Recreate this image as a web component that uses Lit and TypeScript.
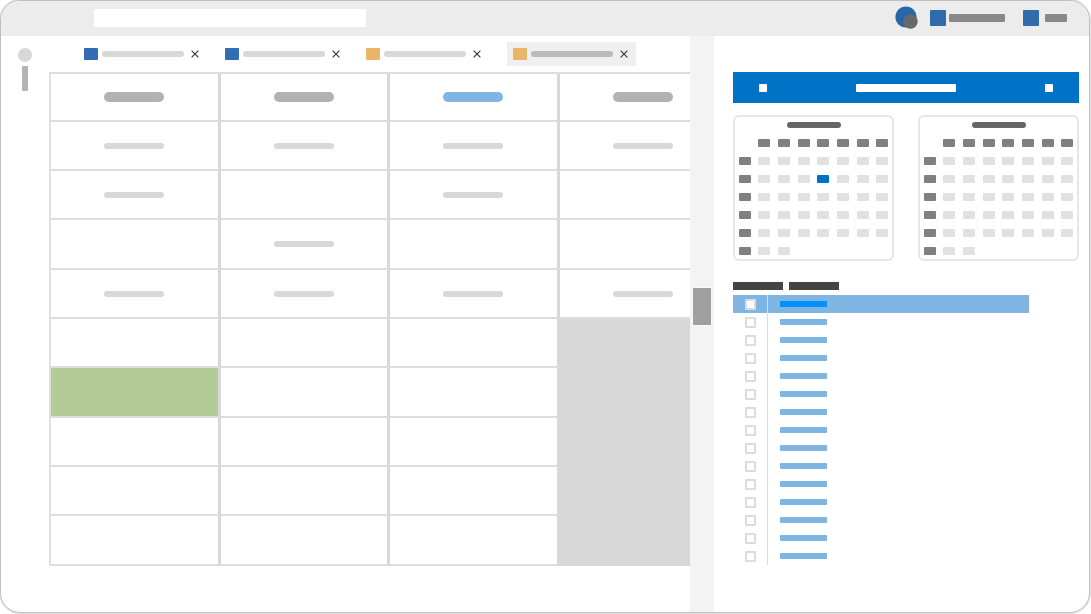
import { LitElement, html, css, svg } from "lit";
import { customElement, property, state } from "lit/decorators.js";
import { classMap } from "lit/directives/class-map.js";

type Tone = "gray" | "blue";

interface Tab {
  id: number;
  color: "blue" | "amber";
}

const DAY_TONES: Tone[] = ["gray", "gray", "blue", "gray"];

const ENTRIES: boolean[][] = [
  [true, true, true, true],
  [true, false, true, false],
  [false, true, false, false],
  [true, true, true, true],
  [false, false, false],
  [false, false, false],
  [false, false, false],
  [false, false, false],
  [false, false, false],
];

/** Month overview: week numbers down the side, weekdays along the top. */
@customElement("month-card")
class MonthCard extends LitElement {
  @property({ type: Number }) selected = -1;
  @property({ type: Number }) days = 37;

  static styles = css`
    :host {
      display: block;
      box-sizing: border-box;
      border: 2px solid #e6e6e6;
      border-radius: 6px;
      background: #fff;
    }
    .title {
      display: block;
      width: 54px;
      height: 6px;
      margin: 5px auto;
      border-radius: 3px;
      background: #666;
    }
    table {
      width: 100%;
      table-layout: fixed;
      border-collapse: collapse;
    }
    th,
    td {
      padding: 6px 0 4px;
    }
    .mark {
      display: block;
      width: 12px;
      height: 8px;
      margin: 0 auto;
      border-radius: 1px;
      background: #e1e1e1;
    }
    th .mark {
      background: #808080;
    }
    .mark.selected {
      background: #0072c6;
    }
  `;

  render() {
    const cols = [0, 1, 2, 3, 4, 5, 6];
    const weeks = [0, 1, 2, 3, 4, 5];
    return html`
      <span class="title"></span>
      <table>
        <thead>
          <tr>
            <td></td>
            ${cols.map(() => html`<th scope="col"><span class="mark"></span></th>`)}
          </tr>
        </thead>
        <tbody>
          ${weeks.map(
            (w) => html`<tr>
              <th scope="row"><span class="mark"></span></th>
              ${cols.map((c) => {
                const day = w * 7 + c;
                return html`<td>
                  ${day < this.days
                    ? html`<span class=${classMap({ mark: true, selected: day === this.selected })}></span>`
                    : ""}
                </td>`;
              })}
            </tr>`
          )}
        </tbody>
      </table>
    `;
  }
}

@customElement("app-root")
class AppRoot extends LitElement {
  @state() private tabs: Tab[] = [
    { id: 1, color: "blue" },
    { id: 2, color: "blue" },
    { id: 3, color: "amber" },
    { id: 4, color: "amber" },
  ];
  @state() private activeTab = 4;
  @state() private activeRow = 0;

  static styles = css`
    :host {
      display: grid;
      box-sizing: border-box;
      min-height: 100vh;
      padding: 0 1px 1px 0;
      background: #fff;
      font-family: "Liberation Sans", Arial, sans-serif;
    }
    button {
      padding: 0;
      border: 0;
      background: none;
      cursor: pointer;
    }
    .frame {
      display: flex;
      flex-direction: column;
      min-width: 0;
      overflow: hidden;
      border: 1px solid #bfbfbf;
      border-radius: 20px;
      box-shadow: 0 0 0 1px #e2e2e2;
      background: #fff;
    }

    /* top bar */
    .top {
      display: flex;
      align-items: center;
      justify-content: space-between;
      height: 35px;
      padding: 0 22px 0 93px;
      background: #ececec;
    }
    .search {
      box-sizing: border-box;
      width: 272px;
      height: 18px;
      margin: 0 0 1px;
      padding: 0 6px;
      border: 0;
      background: #fff;
      font: 12px "Liberation Sans", Arial, sans-serif;
    }
    .tools {
      display: flex;
      align-items: center;
      gap: 12px;
      margin-bottom: 2px;
    }
    .tool {
      display: flex;
      align-items: center;
      gap: 3px;
    }
    .tool + .tool {
      gap: 6px;
      margin-left: 6px;
    }
    .avatar {
      display: block;
      width: 23px;
      height: 24px;
    }
    .tool-icon {
      width: 16px;
      height: 16px;
      border-radius: 1px;
      background: #2f6cab;
    }
    .tool-text {
      width: 56px;
      height: 8px;
      border-radius: 1px;
      background: #888;
    }
    .tool-text.short {
      width: 22px;
    }

    /* page body */
    .body {
      flex: 1;
      display: grid;
      grid-template-columns: 48px minmax(0, 1fr) 24px 375px;
    }
    .rail {
      display: flex;
      flex-direction: column;
      align-items: center;
      gap: 4px;
      padding-top: 12px;
    }
    .rail-dot {
      width: 14px;
      height: 14px;
      border-radius: 50%;
      background: #d8d8d8;
    }
    .rail-bar {
      width: 6px;
      height: 25px;
      border-radius: 1px;
      background: #b5b5b5;
    }
    .main {
      overflow: hidden;
    }
    .tabs {
      display: flex;
      gap: 12px;
      padding: 6px 0 6px 29px;
    }
    .tab {
      display: flex;
      align-items: center;
      gap: 7px;
      height: 24px;
      padding: 0 8px 0 6px;
    }
    .tab.active {
      margin: 0 6px;
      background: #efefef;
    }
    .tab-name {
      display: flex;
      align-items: center;
      gap: 4px;
      height: 24px;
    }
    .tab-icon {
      width: 14px;
      height: 12px;
      border-radius: 1px;
      background: #316cb5;
    }
    .tab-icon.amber {
      background: #eab566;
    }
    .tab-text {
      width: 82px;
      height: 6px;
      border-radius: 3px;
      background: #d8d8d8;
    }
    .active .tab-text {
      background: #bbb;
    }
    .close svg {
      display: block;
      width: 8px;
      height: 8px;
    }

    /* schedule */
    .schedule {
      width: 680px;
      table-layout: fixed;
      border-collapse: separate;
      border-spacing: 0;
      border: solid #dedede;
      border-width: 2px 0 0 2px;
    }
    .schedule th,
    .schedule td {
      box-sizing: border-box;
      height: 49px;
      padding: 0;
      border: solid #dedede;
      border-width: 0 3px 2px 0;
      border-right-color: #d8d8d8;
      vertical-align: middle;
    }
    .schedule th {
      height: 48px;
    }
    .schedule tbody tr:nth-child(3n) td {
      height: 50px;
    }
    .schedule .booked {
      background: #b3cc97;
      background-clip: padding-box;
    }
    .schedule .closed {
      border-color: #d8d8d8;
      background: #d8d8d8;
    }
    .pill {
      display: block;
      width: 60px;
      height: 6px;
      margin: 0 auto;
      border-radius: 3px;
      background: #d8d8d8;
    }
    th .pill {
      height: 10px;
      border-radius: 5px;
      background: #b2b2b2;
    }
    th .pill.blue {
      background: #7eb5e2;
    }

    .splitter {
      display: flex;
      justify-content: center;
      align-items: flex-start;
      padding-top: 252px;
      background: #f3f3f3;
    }
    .grip {
      width: 18px;
      height: 37px;
      background: #9f9f9f;
      box-shadow: 0 0 0 1px #f9f9f9;
      cursor: col-resize;
    }

    /* side panel */
    .side {
      padding: 36px 10px 0 19px;
    }
    .banner {
      display: flex;
      align-items: center;
      justify-content: space-between;
      height: 31px;
      padding: 0 26px;
      background: #0072c6;
    }
    .step {
      width: 8px;
      height: 8px;
      border-radius: 1px;
      background: #fff;
    }
    .range {
      width: 100px;
      height: 8px;
      border-radius: 1px;
      background: #fff;
    }
    .months {
      display: grid;
      grid-template-columns: 1fr 1fr;
      gap: 24px;
      margin-top: 12px;
    }
    .list-head {
      display: flex;
      gap: 6px;
      margin-top: 21px;
    }
    .list-head span {
      width: 50px;
      height: 8px;
      background: #444;
    }
    .list {
      margin: 5px 50px 0 0;
      padding: 0;
      list-style: none;
    }
    .row {
      display: flex;
      align-items: center;
      height: 18px;
    }
    .row.active {
      background: #7fb5e2;
    }
    .pick {
      box-sizing: border-box;
      display: flex;
      align-items: center;
      justify-content: center;
      width: 35px;
      height: 18px;
      border-right: 1px solid #dcdcdc;
    }
    .pick input {
      appearance: none;
      box-sizing: border-box;
      width: 11px;
      height: 11px;
      margin: 0;
      border: 2px solid #dcdcdc;
      border-radius: 1px;
      background: #fff;
    }
    .pick input:checked {
      background: #0072c6;
    }
    .row-name {
      flex: 1;
      display: flex;
      align-items: center;
      height: 18px;
      padding-left: 12px;
    }
    .row-name span {
      width: 47px;
      height: 6px;
      border-radius: 1px;
      background: #7cb4e2;
    }
    .active .row-name span {
      background: #0090ff;
    }
  `;

  private closeTab(id: number) {
    this.tabs = this.tabs.filter((t) => t.id !== id);
  }

  private renderTab(tab: Tab) {
    const active = tab.id === this.activeTab;
    return html`<div class=${classMap({ tab: true, active })}>
      <button class="tab-name" aria-label="Tab ${tab.id}" @click=${() => (this.activeTab = tab.id)}>
        <span class=${classMap({ "tab-icon": true, amber: tab.color === "amber" })}></span>
        <span class="tab-text"></span>
      </button>
      <button class="close" aria-label="Close tab ${tab.id}" @click=${() => this.closeTab(tab.id)}>
        <svg viewBox="0 0 8 8" fill="none" stroke="#333" stroke-width="1.1">
          ${svg`<path d="M.6 .6 7.4 7.4M7.4 .6 .6 7.4"/>`}
        </svg>
      </button>
    </div>`;
  }

  private renderSchedule() {
    return html`<table class="schedule">
      <thead>
        <tr>
          ${DAY_TONES.map(
            (t) => html`<th scope="col"><span class=${classMap({ pill: true, blue: t === "blue" })}></span></th>`
          )}
        </tr>
      </thead>
      <tbody>
        ${ENTRIES.map(
          (row, r) => html`<tr>
            ${row.map(
              (filled, c) => html`<td class=${classMap({ booked: r === 5 && c === 0 })}>
                ${filled ? html`<span class="pill"></span>` : ""}
              </td>`
            )}
            ${r === 4 ? html`<td class="closed" rowspan="5"></td>` : ""}
          </tr>`
        )}
      </tbody>
    </table>`;
  }

  private renderRow(i: number) {
    return html`<li class=${classMap({ row: true, active: i === this.activeRow })}>
      <label class="pick"><input type="checkbox" aria-label="Select item ${i + 1}" /></label>
      <button class="row-name" aria-label="Item ${i + 1}" @click=${() => (this.activeRow = i)}>
        <span></span>
      </button>
    </li>`;
  }

  render() {
    return html`<div class="frame">
      <header class="top">
        <input class="search" type="search" aria-label="Search" />
        <div class="tools">
          <svg class="avatar" viewBox="0 0 23 24">
            <circle cx="11" cy="11" r="10.6" fill="#2966a8" />
            <circle cx="15.5" cy="15.6" r="7.2" fill="#66686b" />
          </svg>
          <button class="tool" aria-label="Account">
            <span class="tool-icon"></span><span class="tool-text"></span>
          </button>
          <button class="tool" aria-label="Help">
            <span class="tool-icon"></span><span class="tool-text short"></span>
          </button>
        </div>
      </header>
      <div class="body">
        <nav class="rail">
          <span class="rail-dot"></span>
          <span class="rail-bar"></span>
        </nav>
        <main class="main">
          <div class="tabs">${this.tabs.map((t) => this.renderTab(t))}</div>
          ${this.renderSchedule()}
        </main>
        <div class="splitter"><button class="grip" aria-label="Resize panel"></button></div>
        <aside class="side">
          <div class="banner">
            <button class="step" aria-label="Previous"></button>
            <span class="range"></span>
            <button class="step" aria-label="Next"></button>
          </div>
          <div class="months">
            <month-card .selected=${10}></month-card>
            <month-card></month-card>
          </div>
          <div class="list-head"><span></span><span></span></div>
          <ul class="list">
            ${Array.from({ length: 15 }, (_, i) => this.renderRow(i))}
          </ul>
        </aside>
      </div>
    </div>`;
  }
}
